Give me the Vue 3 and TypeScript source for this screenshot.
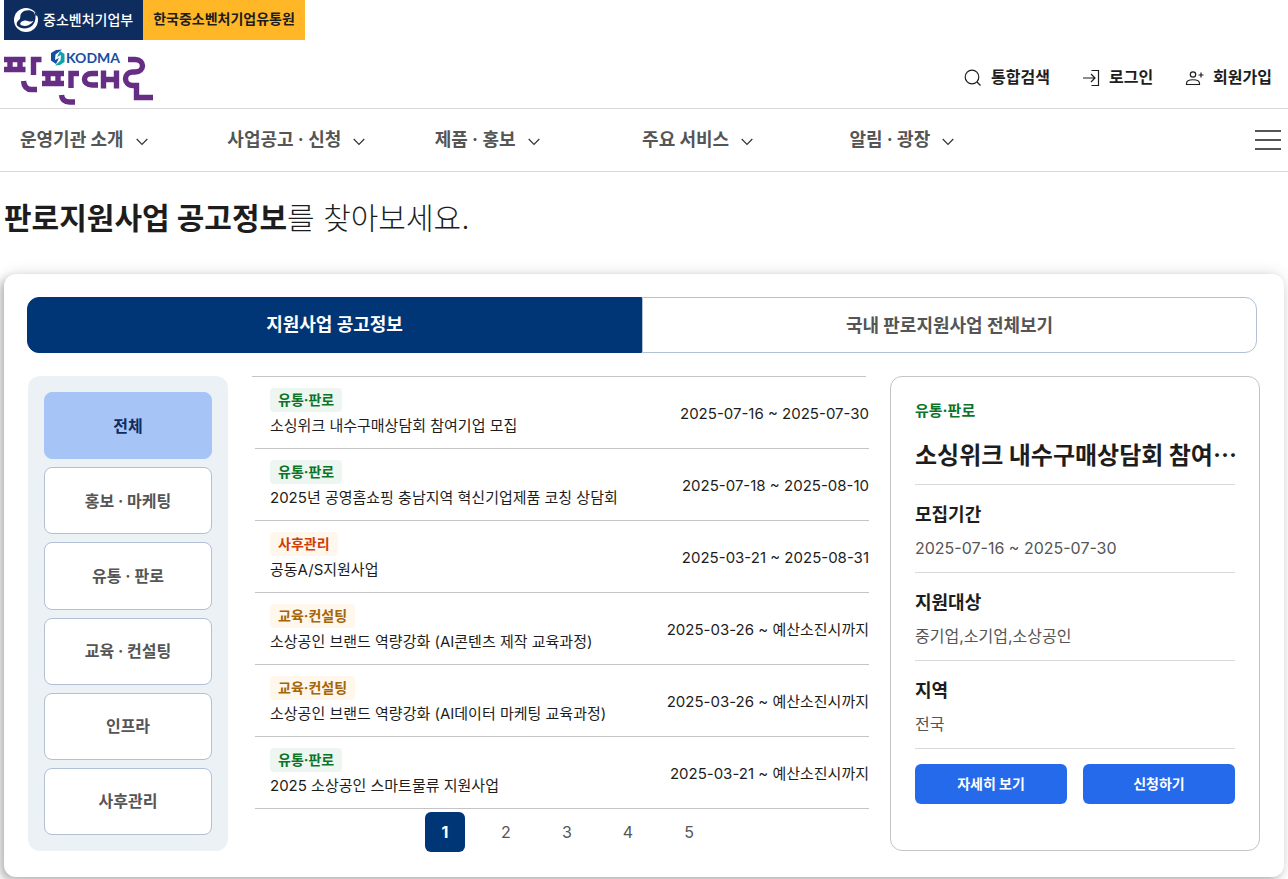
<script setup lang="ts">
import { ref } from 'vue'

interface Notice {
  tag: string
  tone: 'green' | 'orange' | 'amber'
  title: string
  period: string
}

const menus: string[] = ['운영기관 소개', '사업공고 · 신청', '제품 · 홍보', '주요 서비스', '알림 · 광장']
const categories: string[] = ['전체', '홍보 · 마케팅', '유통 · 판로', '교육 · 컨설팅', '인프라', '사후관리']
const notices: Notice[] = [
  { tag: '유통·판로', tone: 'green', title: '소싱위크 내수구매상담회 참여기업 모집', period: '2025-07-16 ~ 2025-07-30' },
  { tag: '유통·판로', tone: 'green', title: '2025년 공영홈쇼핑 충남지역 혁신기업제품 코칭 상담회', period: '2025-07-18 ~ 2025-08-10' },
  { tag: '사후관리', tone: 'orange', title: '공동A/S지원사업', period: '2025-03-21 ~ 2025-08-31' },
  { tag: '교육·컨설팅', tone: 'amber', title: '소상공인 브랜드 역량강화 (AI콘텐츠 제작 교육과정)', period: '2025-03-26 ~ 예산소진시까지' },
  { tag: '교육·컨설팅', tone: 'amber', title: '소상공인 브랜드 역량강화 (AI데이터 마케팅 교육과정)', period: '2025-03-26 ~ 예산소진시까지' },
  { tag: '유통·판로', tone: 'green', title: '2025 소상공인 스마트물류 지원사업', period: '2025-03-21 ~ 예산소진시까지' },
]
const details = [
  { label: '모집기간', value: '2025-07-16 ~ 2025-07-30' },
  { label: '지원대상', value: '중기업,소기업,소상공인' },
  { label: '지역', value: '전국' },
]

const category = ref(0)
const page = ref(1)
</script>

<template>
  <div class="page">
    <div class="orgs">
      <a class="org ministry" href="#">
        <svg width="26" height="26" viewBox="0 0 26 26" aria-hidden="true">
          <circle cx="13" cy="13" r="12" fill="#fff" />
          <path d="M20.500 5c3 3.500 2.500 9-2 9.500-3 .3-4.500-1.500-7-1C7 14.300 6 17.500 9 18.500c6 1.800 12-2.500 13.500-9.500.5 7-4 12.500-11 12.500-3 0-5.500-1-7.500-3C3 15 5 14 6.500 12.500 8 10.500 6.500 8 9 5.500c3-3 8.500-3 11.500-.5Z" fill="#0f2c5f" />
          <path d="M21.500 4.500 25 8l-2.500 1Z" fill="#0f2c5f" />
        </svg>
        <span>중소벤처기업부</span>
      </a>
      <a class="org agency" href="#">한국중소벤처기업유통원</a>
    </div>

    <header class="header">
      <a class="logo" href="#" aria-label="판판대로">
        <svg width="150" height="56" viewBox="0 0 150 56">
          <g fill="none" stroke="#652d83" stroke-width="5.400">
            <path d="M0 10.500H21.500M6 10.500v10M16 10.500v10M0 20.500H21.500" />
            <path d="M29.500 26V10.500H37.500M19.500 32c.5 6 3.500 8.500 8 8.500H33" />
            <path d="M38 24.500H60M44 24.500v10M54 24.500v10M38 34.500H60" />
            <path d="M67 39V24.500H75M57.500 46c.5 5 3.500 7 8 7H71" />
            <path d="M94 24.500h-6c-10 0-10 11.500 0 11.500h6M99.500 21.500v18M112.500 21.500v18M99.500 30.500h13" />
            <path d="M124 10.500h7c10 0 10 12.500 0 12.500h-2c-10 0-10 13.500 0 13.500h3.500v12H149" />
          </g>
          <path d="m52 1 6-.5-6.500 5L51 11l4-2-3 6-5-3.500V4Z" fill="#174ea0" />
          <path d="m56 16-5 .5 5.500-5 .5-5.500-4 2 3-6 4.500 3v8Z" fill="#13a0a8" />
          <text x="62" y="14" class="kodma">KODMA</text>
        </svg>
      </a>
      <nav class="utils" aria-label="회원 메뉴">
        <a href="#">
          <svg width="18" height="18" viewBox="0 0 18 18"><circle cx="8" cy="9" r="6.800" /><path d="m13 14 3.500 3.500" /></svg>
          통합검색
        </a>
        <a href="#">
          <svg width="18" height="18" viewBox="0 0 18 18"><path d="M1 10h12M9 6l4 4-4 4M9.500 2.500h7v15h-7" /></svg>
          로그인
        </a>
        <a href="#">
          <svg width="19" height="18" viewBox="0 0 19 18"><circle cx="8" cy="6.500" r="2.700" /><path d="M1.500 16.500v-1c0-5 13-5 13 0v1ZM16 4.500v5M13.500 7h5" /></svg>
          회원가입
        </a>
      </nav>
    </header>

    <nav class="gnb" aria-label="주 메뉴">
      <ul>
        <li v-for="m in menus" :key="m">
          <a href="#">{{ m }}<svg width="12" height="12" viewBox="0 0 12 12"><path d="m.7 5 5.300 5.500L11.300 5" /></svg></a>
        </li>
      </ul>
      <button class="burger" type="button" aria-label="전체 메뉴"><i></i><i></i><i></i></button>
    </nav>

    <main>
      <h1><strong>판로지원사업 공고정보</strong>를 찾아보세요.</h1>

      <section class="card">
        <div class="tabs" role="tablist">
          <button type="button" role="tab" class="active" aria-selected="true">지원사업 공고정보</button>
          <button type="button" role="tab" aria-selected="false">국내 판로지원사업 전체보기</button>
        </div>

        <div class="body">
          <div class="cats">
            <button v-for="(c, i) in categories" :key="c" type="button" :class="{ active: i === category }" @click="category = i">{{ c }}</button>
          </div>

          <div class="board">
            <ul class="notices">
              <li v-for="n in notices" :key="n.title">
                <a href="#">
                  <span class="info">
                    <span class="tag" :class="n.tone">{{ n.tag }}</span>
                    <span class="name">{{ n.title }}</span>
                  </span>
                  <span class="period">{{ n.period }}</span>
                </a>
              </li>
            </ul>
            <div class="pager">
              <button v-for="p in 5" :key="p" type="button" :class="{ active: p === page }" @click="page = p">{{ p }}</button>
            </div>
          </div>

          <article class="detail">
            <p class="kind">유통·판로</p>
            <h2>소싱위크 내수구매상담회 참여⋯</h2>
            <dl>
              <div v-for="d in details" :key="d.label">
                <dt>{{ d.label }}</dt>
                <dd>{{ d.value }}</dd>
              </div>
            </dl>
            <div class="actions">
              <button type="button">자세히 보기</button>
              <button type="button">신청하기</button>
            </div>
          </article>
        </div>
      </section>
    </main>
  </div>
</template>

<style>
body { margin: 0; background: #fff; }
</style>

<style scoped>
.page {
  font-family: Inter, "Noto Sans CJK KR", sans-serif;
  font-size: 16px;
  line-height: 24px;
  color: #1d1d1d;
  overflow: hidden;
}
.page *, .page *::before { box-sizing: border-box; }
a { color: inherit; text-decoration: none; }
ul, dl, dd, p, h1, h2 { margin: 0; padding: 0; list-style: none; }
button { font: inherit; color: inherit; cursor: pointer; margin: 0; padding: 0; border: 0; background: none; }

.orgs { display: flex; height: 40px; padding-left: 4px; font-size: 14px; }
.org { display: flex; align-items: center; }
.ministry { gap: 4px; padding: 0 10px 0 9px; background: #0f2c5f; color: #fff; font-weight: 500; }
.agency { padding: 0 10px 2px; background: #ffb728; font-weight: 700; }

.header { display: flex; justify-content: space-between; height: 69px; padding: 9px 16px 0 4px; border-bottom: 1px solid #d8d8d8; }
.kodma { font: 700 14px Lato, sans-serif; fill: #174ea0; }
.utils { display: flex; gap: 32px; height: 56px; align-items: center; font-weight: 700; }
.utils a { display: flex; align-items: center; gap: 9px; }
svg { flex: none; }
.utils svg { fill: none; stroke: #1d1d1d; stroke-width: 1.200; }

.gnb { display: flex; justify-content: space-between; align-items: center; height: 63px; padding: 0 4px; border-bottom: 1px solid #d8d8d8; }
.gnb ul { display: grid; grid-template-columns: repeat(5, 1fr); width: 81%; }
.gnb li { padding-left: 16px; font-size: 18px; font-weight: 700; color: #555; }
.gnb li a { display: flex; align-items: center; gap: 12px; }
.gnb li svg { fill: none; stroke: #333; stroke-width: 1.200; }
.burger { display: flex; flex-direction: column; gap: 7px; width: 26px; margin-right: 3px; }
.burger i { height: 2px; background: #555; }

h1 { padding: 26px 4px 36px; font-size: 30px; line-height: 40px; font-weight: 300; }
h1 strong { font-weight: 700; }

.card { margin: 0 4px 16px; padding: 23px 24px 26px; border-radius: 12px; background: #fff; box-shadow: 0 0 16px rgba(0, 0, 0, .12), -4px 4px 8px rgba(0, 0, 0, .24); }
.tabs { display: flex; margin: 0 3px 23px -1px; height: 56px; }
.tabs button { flex: 1; padding-top: 1px; border: 1px solid #b1c0d4; border-radius: 0 12px 12px 0; font-size: 18px; font-weight: 700; color: #555; }
.tabs .active { padding: 0; border-color: #003675; border-radius: 12px 0 0 12px; background: #003675; color: #fff; }
.body { display: flex; height: 475px; }

.cats { display: flex; flex-direction: column; gap: 8px; width: 200px; padding: 16px; border-radius: 12px; background: #ecf1f5; }
.cats button { flex: 1; border: 1px solid #b1c0d4; border-radius: 8px; background: #fff; font-weight: 700; color: #555; }
.cats .active { border-color: #a7c4f7; background: #a7c4f7; color: #0f2c5f; }

.board { flex: 1; margin: 0 21px 0 24px; min-width: 0; }
.notices { margin-right: 3px; border-top: 1px solid #c4c4c4; }
.notices li { margin: 0 -3px 0 3px; height: 72px; border-bottom: 1px solid #c4c4c4; font-size: 15px; }
.notices a { display: flex; justify-content: space-between; align-items: center; height: 100%; padding: 2px 0 0 15px; }
.info { display: flex; flex-direction: column; align-items: flex-start; gap: 2px; padding-bottom: 1px; }
.tag { padding: 0 8px; border-radius: 4px; font-size: 14px; font-weight: 700; }
.green { background: #edf6f0; color: #0a7428; }
.orange { background: #fff6ec; color: #cf3d08; }
.amber { background: #fff6ec; color: #a3660a; }
.pager { display: flex; justify-content: center; gap: 21px; padding: 3px 0 0 13px; }
.pager button { width: 40px; height: 40px; border-radius: 6px; color: #555; }
.pager .active { background: #003675; color: #fff; font-weight: 700; }

.detail { width: 370px; padding: 22px 24px; border: 1px solid #c4c4c4; border-radius: 12px; }
.kind { font-size: 15px; font-weight: 700; color: #0a7428; }
h2 { padding: 13px 0 12px; font-family: "Noto Sans CJK KR", sans-serif; font-size: 24px; line-height: 36px; font-weight: 700; white-space: nowrap; border-bottom: 1px solid #d8d8d8; }
dl div { height: 88px; padding-top: 17px; border-bottom: 1px solid #d8d8d8; }
dt { font-size: 18px; line-height: 26px; font-weight: 700; }
dd { padding-top: 8px; color: #555; }
.actions { display: flex; gap: 16px; padding-top: 15px; }
.actions button { flex: 1; height: 40px; border-radius: 6px; background: #256aeb; color: #fff; font-size: 14px; font-weight: 700; }
</style>
